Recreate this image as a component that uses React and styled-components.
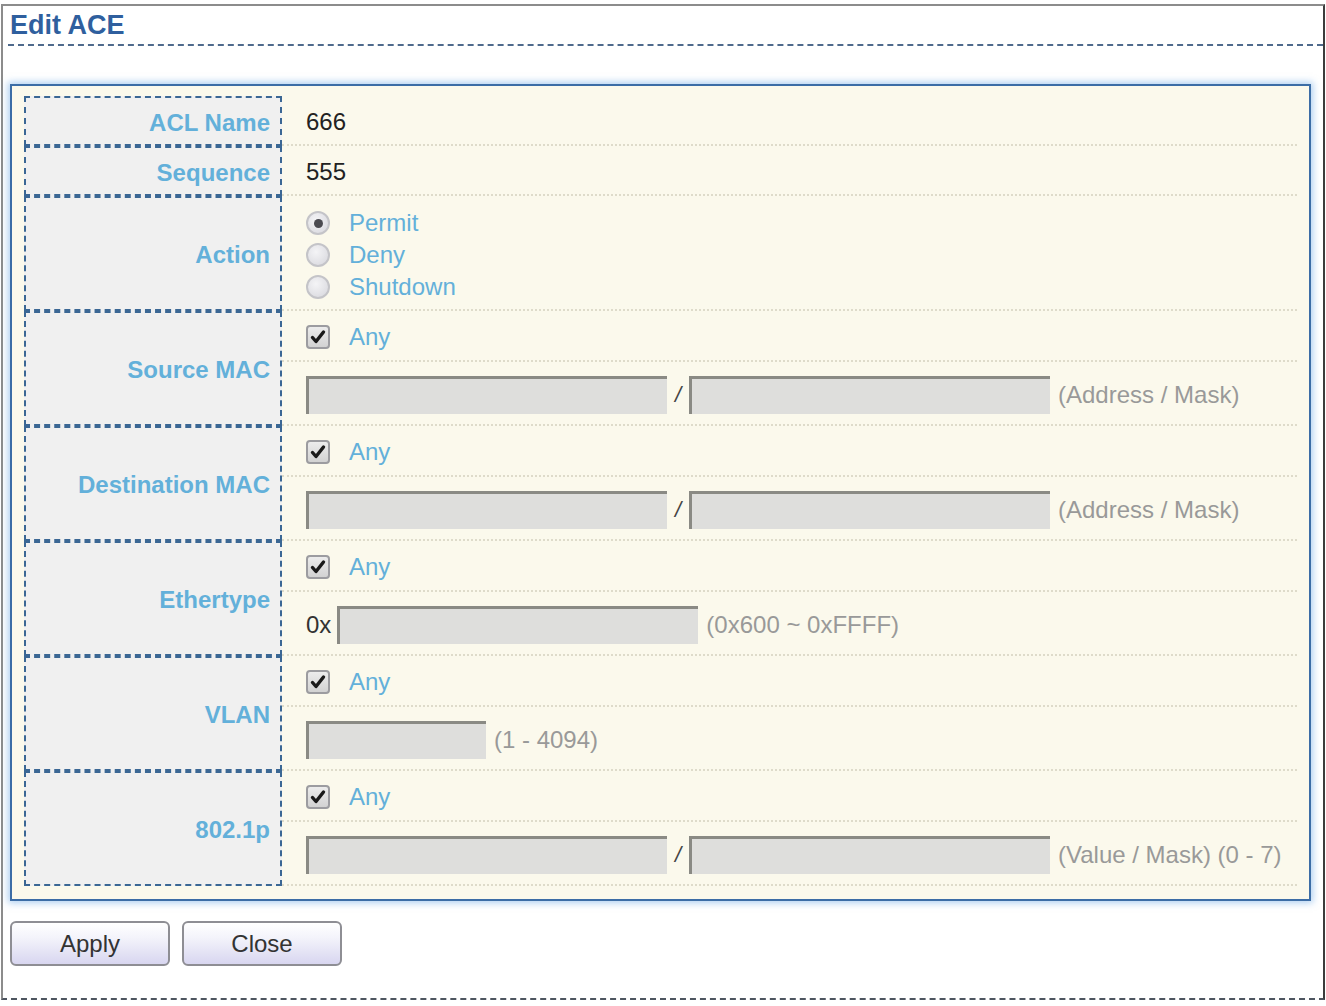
import React from "react";
import styled, { createGlobalStyle } from "styled-components";

const GlobalStyle = createGlobalStyle`
  html, body {
    margin: 0;
    padding: 0;
    background: #fff;
    font-family: "Liberation Sans", Arial, sans-serif;
  }
`;

const Frame = styled.div`
  margin: 4px 1px 0 1px;
  height: 996px;
  border: 2px solid #8c8c8c;
  border-bottom: 2px dashed #4e5560;
  border-right-color: #3c3c3c;
  box-sizing: border-box;
  display: flex;
  flex-direction: column;
`;

const Header = styled.div`
  margin-left: 5px;
  height: 38px;
  border-bottom: 2px dashed #4f6a8c;
  display: flex;
  align-items: center;
  padding-left: 2px;
`;

const Title = styled.span`
  font-size: 27px;
  font-weight: bold;
  color: #2f5f9e;
`;

const Fieldset = styled.div`
  margin: 38px 12px 0 7px;
  border: 2px solid #3c6da6;
  background: #fbf9ec;
  box-shadow: 0 0 7px 2px rgba(110, 170, 230, 0.55);
  padding: 10px 12px 13px 12px;
`;

const Row = styled.div`
  display: flex;
`;

const LabelCell = styled.div`
  width: 258px;
  box-sizing: border-box;
  border: 2px dashed #3b6794;
  background: #f0f0f0;
  display: flex;
  align-items: center;
  justify-content: flex-end;
  padding: 3px 10px 0 0;
  font-size: 24px;
  font-weight: bold;
  color: #63b0da;
`;

const ValueCell = styled.div`
  flex: 1;
  display: flex;
  flex-direction: column;
`;

const Line = styled.div`
  height: ${(p) => p.$h || 50}px;
  box-sizing: border-box;
  border-bottom: 2px dotted #dedbca;
  display: flex;
  align-items: center;
  padding: 3px 0 0 24px;
  font-size: 24px;
  color: #222;
`;

const RadioList = styled.div`
  height: 115px;
  box-sizing: border-box;
  border-bottom: 2px dotted #dedbca;
  padding: 11px 0 0 24px;
  display: flex;
  flex-direction: column;
`;

const Option = styled.label`
  height: 32px;
  display: flex;
  align-items: center;
  gap: 19px;
  font-size: 24px;
  color: #63b0da;
`;

const Radio = styled.span`
  width: 20px;
  height: 20px;
  border-radius: 50%;
  border: 2px solid #c4c4c8;
  background: radial-gradient(circle at 40% 35%, #f4f4f6, #d6d6dc);
  display: flex;
  align-items: center;
  justify-content: center;
  &::after {
    content: "";
    display: ${(p) => (p.$on ? "block" : "none")};
    width: 9px;
    height: 9px;
    border-radius: 50%;
    background: #4a4a50;
  }
`;

const Box = styled.span`
  width: 20px;
  height: 20px;
  border-radius: 4px;
  border: 2px solid #9c9ca0;
  background: linear-gradient(#ececec, #d2d2d2);
  display: flex;
  align-items: center;
  justify-content: center;
`;

const Input = styled.div`
  width: ${(p) => p.$w || 361}px;
  height: 38px;
  box-sizing: border-box;
  background: #dededc;
  border-top: 3px solid #8a8a84;
  border-left: 3px solid #8a8a84;
`;

const Slash = styled.span`
  width: 22px;
  text-align: center;
  color: #444;
  font-size: 22px;
  font-style: italic;
`;

const Hint = styled.span`
  margin-left: 8px;
  color: #999;
  font-size: 24px;
`;

const Prefix = styled.span`
  color: #333;
  margin-right: 6px;
`;

const Buttons = styled.div`
  display: flex;
  gap: 12px;
  margin: 20px 0 0 7px;
`;

const Button = styled.button`
  width: 160px;
  height: 45px;
  border: 2px solid #8e8e94;
  border-radius: 6px;
  background: linear-gradient(#ffffff 0%, #f4f4fb 35%, #d8d6f0 100%);
  font-family: "Liberation Sans", Arial, sans-serif;
  font-size: 24px;
  color: #333;
  padding: 0;
`;

function Check() {
  return (
    <Box>
      <svg width="16" height="16" viewBox="0 0 16 16">
        <path
          d="M2.5 8.5 L6 12.5 L13.5 3"
          fill="none"
          stroke="#1a1a1a"
          strokeWidth="3.4"
          strokeLinecap="round"
          strokeLinejoin="round"
        />
      </svg>
    </Box>
  );
}

function AnyLine() {
  return (
    <Line $h={51}>
      <Option>
        <Check />
        Any
      </Option>
    </Line>
  );
}

function PairInputs({ hint }) {
  return (
    <Line $h={64}>
      <Input />
      <Slash>/</Slash>
      <Input />
      <Hint>{hint}</Hint>
    </Line>
  );
}

export default function App() {
  return (
    <>
      <GlobalStyle />
      <Frame>
        <Header>
          <Title>Edit ACE</Title>
        </Header>

        <Fieldset>
          <Row>
            <LabelCell>ACL Name</LabelCell>
            <ValueCell>
              <Line>666</Line>
            </ValueCell>
          </Row>
          <Row>
            <LabelCell>Sequence</LabelCell>
            <ValueCell>
              <Line>555</Line>
            </ValueCell>
          </Row>
          <Row>
            <LabelCell>Action</LabelCell>
            <ValueCell>
              <RadioList>
                <Option>
                  <Radio $on />
                  Permit
                </Option>
                <Option>
                  <Radio />
                  Deny
                </Option>
                <Option>
                  <Radio />
                  Shutdown
                </Option>
              </RadioList>
            </ValueCell>
          </Row>
          <Row>
            <LabelCell>Source MAC</LabelCell>
            <ValueCell>
              <AnyLine />
              <PairInputs hint="(Address / Mask)" />
            </ValueCell>
          </Row>
          <Row>
            <LabelCell>Destination MAC</LabelCell>
            <ValueCell>
              <AnyLine />
              <PairInputs hint="(Address / Mask)" />
            </ValueCell>
          </Row>
          <Row>
            <LabelCell>Ethertype</LabelCell>
            <ValueCell>
              <AnyLine />
              <Line $h={64}>
                <Prefix>0x</Prefix>
                <Input />
                <Hint>(0x600 ~ 0xFFFF)</Hint>
              </Line>
            </ValueCell>
          </Row>
          <Row>
            <LabelCell>VLAN</LabelCell>
            <ValueCell>
              <AnyLine />
              <Line $h={64}>
                <Input $w={180} />
                <Hint>(1 - 4094)</Hint>
              </Line>
            </ValueCell>
          </Row>
          <Row>
            <LabelCell>802.1p</LabelCell>
            <ValueCell>
              <AnyLine />
              <PairInputs hint="(Value / Mask) (0 - 7)" />
            </ValueCell>
          </Row>
        </Fieldset>

        <Buttons>
          <Button>Apply</Button>
          <Button>Close</Button>
        </Buttons>
      </Frame>
    </>
  );
}
